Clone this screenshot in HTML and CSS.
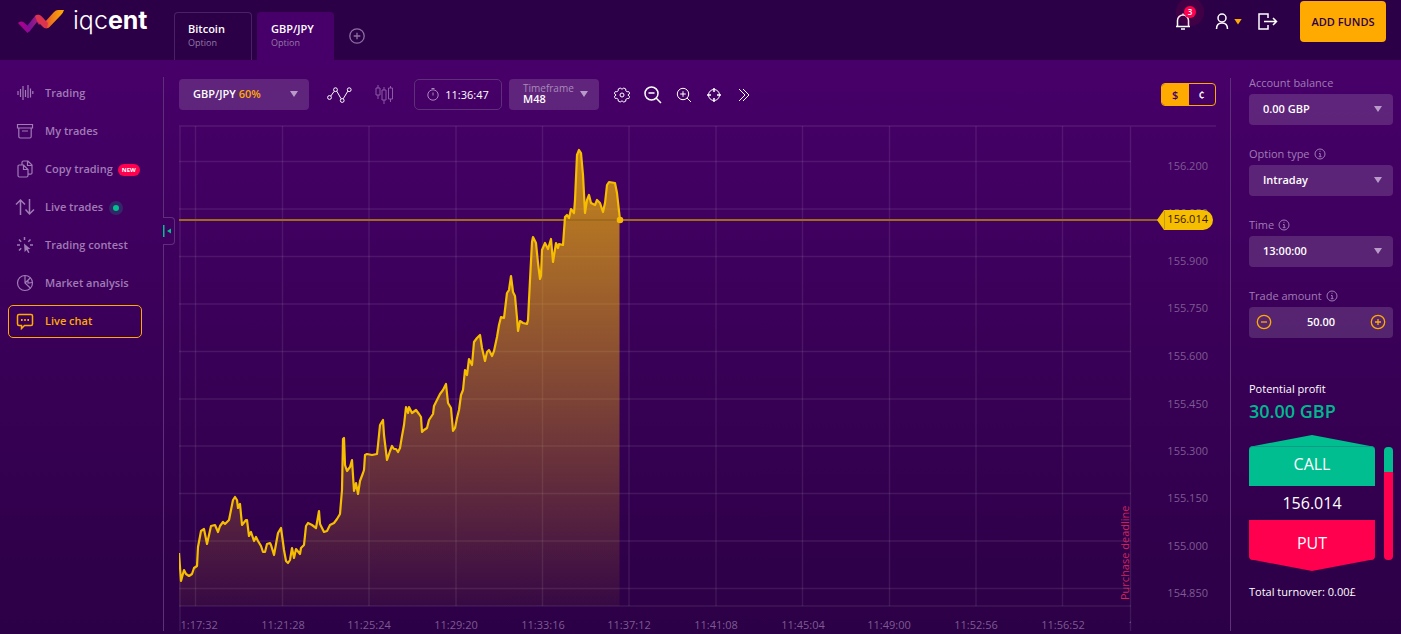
FILE: index.html
```html
<!DOCTYPE html>
<html lang="en">
<head>
<meta charset="utf-8">
<title>iqcent</title>
<link rel="stylesheet" href="styles.css">
</head>
<body>
<header class="header">
  <a class="logo" href="#">
    <svg width="46" height="25" viewBox="0 0 46 25" aria-hidden="true">
      <defs>
        <linearGradient id="lg1" x1="0" x2="1"><stop offset="0" stop-color="#b0008e"/><stop offset="1" stop-color="#8a0a98"/></linearGradient>
        <linearGradient id="lg2" x1="0" x2="1"><stop offset="0" stop-color="#6a109c"/><stop offset=".5" stop-color="#9a1c84"/><stop offset="1" stop-color="#e0304e"/></linearGradient>
        <linearGradient id="lg3" x1="0" x2="1"><stop offset="0" stop-color="#e8452e"/><stop offset=".4" stop-color="#ee7a1c"/><stop offset="1" stop-color="#ffae00"/></linearGradient>
      </defs>
      <path d="M9 18 17 8q3-2.500 6 0l3 3-5 6-2-3-8 10z" fill="url(#lg2)"/>
      <path d="M0 15q3-2.500 6-.500l5 4.500 1.500 3-3 3z" fill="url(#lg1)"/>
      <path d="M26 15 36 4q2-2 4-2h6q-1 3-3 5L31.500 19q-2 2-4 1z" fill="url(#lg3)"/>
      <path d="M17 8q3-2.500 6 0l7 7-1 5q-2 1-4-1l-6-6z" fill="#dc3450"/>
    </svg>
    <span class="logo-text">iqc<b>ent</b></span>
  </a>
  <nav class="tabs" aria-label="Assets">
    <button class="tab"><b>Bitcoin</b><small>Option</small></button>
    <button class="tab tab-active"><b>GBP/JPY</b><small>Option</small></button>
    <button class="icon-btn add-tab" aria-label="Add asset">
      <svg width="16" height="16" viewBox="0 0 16 16"><circle cx="8" cy="8" r="7.2"/><path d="M8 4.700v6.600M4.700 8h6.600"/></svg>
    </button>
  </nav>
  <div class="account">
    <button class="icon-btn bell" aria-label="Notifications">
      <svg width="16" height="17" viewBox="0 0 16 17"><path d="M1 13.500h14M2.500 13.500V7.500a5.500 5.500 0 0 1 11 0v6M8 2V.500M6 16h4"/></svg>
      <span class="badge">3</span>
    </button>
    <button class="icon-btn user" aria-label="Profile">
      <svg width="14" height="17" viewBox="0 0 14 17"><circle cx="7" cy="5" r="4"/><path d="M1.500 16q0-6 5.500-6t5.500 6"/></svg>
      <span class="caret caret-gold"></span>
    </button>
    <button class="icon-btn logout" aria-label="Log out">
      <svg width="20" height="17" viewBox="0 0 20 17"><path d="M10 5V1H1v15h9v-4M6 8.500h12.500M15 5l3.500 3.500L15 12"/></svg>
    </button>
    <button class="add-funds">ADD FUNDS</button>
  </div>
</header>

<div class="main">
  <aside class="sidebar">
    <nav class="menu" aria-label="Main">
      <a class="item" href="#"><svg viewBox="0 0 18 18"><path d="M2 7v4M4.500 5v8M7 2v14M9.500 6v7M12 1v13M14.500 4.500v9M16.800 7v3"/></svg>Trading</a>
      <a class="item" href="#"><svg viewBox="0 0 18 18"><path d="M1.500 2.500h15v3.500h-15zM2.800 6v8.500q0 1.500 1.500 1.500h9.400q1.500 0 1.500-1.500V6M6 9h6"/></svg>My trades</a>
      <a class="item" href="#"><svg viewBox="0 0 18 18"><path d="M6 4.500V2.500q0-1.500 1.500-1.500H12l4 4v8q0 1.200-1.500 1.200h-2M11.500 1v4.500H16M2 6.200q0-1.200 1.200-1.200H7.500l4.500 4.500v6q0 1.500-1.500 1.500h-7Q2 17 2 15.500zM7.500 5v4.500H12"/></svg>Copy trading<span class="new">NEW</span></a>
      <a class="item" href="#"><svg class="wide" viewBox="0 0 20 18"><path d="M5.500 17V2M1 6.500 5.500 2 10 6.500M14.500 1v15M10.500 11.500l4 4.500 4.500-4.500"/></svg>Live trades<span class="live"></span></a>
      <a class="item" href="#"><svg class="heavy" viewBox="0 0 18 18"><path d="M8.500 1v3M3 3.500 5.200 5.700M14.500 3.500l-2.200 2.200M1 9h3M14 9h3M3 14.500l2.200-2.200"/><path class="solid" d="M8 7.500l6.500 5.500-2.600.3 1.600 3.200-1.300.6-1.600-3.200L8.600 16z"/></svg>Trading contest</a>
      <a class="item" href="#"><svg viewBox="0 0 18 18"><circle cx="9" cy="9" r="7.500"/><path d="M9 1.500V9l5.500 5.200M9 9l5.500-5.200M12 6v3l4.500-.5"/></svg>Market analysis</a>
      <a class="item item-active" href="#"><svg class="heavy" viewBox="0 0 18 18"><path d="M3 2.500h12q1.500 0 1.500 1.500v8q0 1.500-1.500 1.500H8.500L5.500 16.500v-3H3Q1.500 13.500 1.500 12V4Q1.500 2.500 3 2.500z"/><path class="dots" d="M5 8h1.600M8.200 8h1.600M11.400 8h1.600"/></svg>Live chat</a>
    </nav>
    <button class="collapse" aria-label="Collapse menu"><svg width="9" height="12" viewBox="0 0 9 12"><path d="M0 0h1.500v12H0zM8 3.500v5L4 6z"/></svg></button>
  </aside>

  <main class="center">
    <div class="toolbar">
      <button class="field pair" aria-haspopup="listbox"><span>GBP/JPY <em>60%</em></span><span class="caret"></span></button>
      <button class="icon-btn tool-line" aria-label="Line chart"><svg width="25" height="16" viewBox="0 0 25 16"><path d="M3.800 9 7.200 4.300M9.800 4.200l4.200 7.500M16.200 11.800 20.800 4.200"/><circle cx="2.500" cy="10.500" r="1.900"/><circle cx="8.500" cy="2.700" r="1.900"/><circle cx="15.200" cy="13.500" r="1.900"/><circle cx="22.200" cy="2.700" r="1.900"/></svg></button>
      <button class="icon-btn tool-candles" aria-label="Candlestick chart"><svg width="18" height="19" viewBox="0 0 18 19"><path d="M3 0v3M3 10v4M9 2v3M9 15v4M15.500 1v2M15.500 14v3M1 3h4v7H1zM7 5h4v10H7zM13.500 3h4v11h-4z"/></svg></button>
      <div class="clock"><svg width="12" height="13" viewBox="0 0 12 13"><circle cx="6" cy="7" r="5.200"/><path d="M6 4.500V7.500M4.500.500h3"/></svg><time>11:36:47</time></div>
      <label class="field timeframe"><span class="tf-label">Timeframe</span><select><option>M48</option></select><span class="caret"></span></label>
      <div class="tools">
        <button class="icon-btn" aria-label="Settings"><svg width="16" height="16" viewBox="0 0 16 16"><circle cx="8" cy="8" r="2"/><path d="M6.200 1Q8 3.400 9.800 1l2 1q-.8 3 3 2.700v0q1 1 .6 2.300-3 1 0 2.300.2 1.300-.6 2.200-3.600-.4-3 2.600l-2 1Q8 12.600 6.200 15l-2-1q.6-3-3-2.600Q.400 10.500.600 9.200q3-1.200 0-2.300Q.200 5.700 1.200 4.700q3.800.3 3-2.700z"/></svg></button>
        <button class="icon-btn" aria-label="Zoom out"><svg width="18" height="18" viewBox="0 0 18 18"><g class="bold"><circle cx="7.500" cy="7.500" r="6.500"/><path d="M12.300 12.300 17 17M4.500 7h6"/></g></svg></button>
        <button class="icon-btn" aria-label="Zoom in"><svg width="16" height="16" viewBox="0 0 16 16"><circle cx="7" cy="7" r="5.700"/><path d="M11 11l4 4M7 4.200v5.600M4.200 7h5.600"/></svg></button>
        <button class="icon-btn" aria-label="Crosshair"><svg width="16" height="16" viewBox="0 0 16 16"><circle cx="8" cy="8" r="5.500"/><g class="bold"><path d="M8 1v4M8 11v4M1 8h4M11 8h4"/></g></svg></button>
        <button class="icon-btn" aria-label="More tools"><svg width="14" height="14" viewBox="0 0 14 14"><path d="M2 1l6 6-6 6M6 1l6 6-6 6"/></svg></button>
      </div>
      <div class="currency" role="group" aria-label="Units"><button class="on">$</button><button>¢</button></div>
    </div>

    <svg class="chart" viewBox="179 125 1037 506" role="img" aria-label="GBP/JPY price chart">
      <defs>
        <linearGradient id="area" gradientUnits="userSpaceOnUse" x1="0" y1="150" x2="0" y2="606">
          <stop offset="0" stop-color="#f6b800" stop-opacity=".74"/><stop offset="1" stop-color="#f6b800" stop-opacity=".05"/>
        </linearGradient>
        <clipPath id="axis-clip"><path d="M179 610h952v21H179z"/></clipPath>
        <clipPath id="plot-clip"><path d="M179 125h952v482H179z"/></clipPath>
      </defs>
      <g class="grid">
        <path d="M179 161.500H1131M179 209H1131M179 256.500H1131M179 304H1131M179 351.500H1131M179 399H1131M179 446H1131M179 493.500H1131M179 541H1131M179 588.500H1131M179 606H1131"/>
        <path d="M195.500 126V606M282.500 126V606M369 126V606M456 126V606M542.500 126V606M629 126V606M716 126V606M802.500 126V606M889.500 126V606M976 126V606M1062.500 126V606"/>
        <path class="edge" d="M179 126H1216M180 126V631M1130.500 126V631"/>
      </g>
      <g clip-path="url(#plot-clip)">
        <path fill="url(#area)" d="M179 606V553L181 581 184 570 186 574 189 576 192 574 194 568 197 566 198 547 201 531 204 529 207 544 211 526 215 525 218 532 220 526 223 522 225 524 229 520 230 515 233 500 235 497 237 500 238 508 240 504 242 525 246 520 247 520 249 536 251 532 254 541 256 537 258 541 261 546 263 552 265 552 267 544 270 543 271 545 274 555 278 533 281 528 284 550 286 561 288 563 290 560 292 548 294 558 296 549 300 554 301 548 304 545 306 526 308 523 312 525 316 528 319 511 320 524 324 532 327 531 330 525 334 523 337 519 340 514 342 490 343 439 344 438 345 465 347 471 350 467 352 460 354 491 356 483 358 494 360 481 363 473 364 470 365 455 367 454 372 455 377 454 378 445 380 425 383 420 384 435 387 460 390 451 392 446 394 449 396 449 398 452 400 448 402 436 404 425 406 407 408 413 409 407 412 413 416 410 419 414 421 417 422 432 424 430 427 428 429 420 433 414 434 406 438 398 440 394 443 390 446 384 448 403 451 408 453 431 455 428 457 418 459 410 461 395 463 390 465 370 467 375 469 359 472 365 474 342 477 338 480 335 482 348 485 361 487 352 489 350 492 356 494 351 497 337 499 325 501 317 504 318 507 293 509 290 511 276 513 292 515 296 517 318 518 331 520 321 523 323 527 324 528 320 530 280 532 242 533 237 536 243 538 263 540 279 541 276 542 250 545 243 548 249 551 239 553 262 556 243 558 248 559 244 563 245 565 217 567 215 569 218 571 209 574 213 575 200 577 155 579 150 581 153 583 175 585 213 587 200 589 195 591 203 595 205 597 200 600 203 603 212 605 203 607 185 609 182 615 183 617 193 619.500 220V606z"/>
        <path class="price-line" d="M179 220H1131"/>
        <path class="series" d="M179 553L181 581 184 570 186 574 189 576 192 574 194 568 197 566 198 547 201 531 204 529 207 544 211 526 215 525 218 532 220 526 223 522 225 524 229 520 230 515 233 500 235 497 237 500 238 508 240 504 242 525 246 520 247 520 249 536 251 532 254 541 256 537 258 541 261 546 263 552 265 552 267 544 270 543 271 545 274 555 278 533 281 528 284 550 286 561 288 563 290 560 292 548 294 558 296 549 300 554 301 548 304 545 306 526 308 523 312 525 316 528 319 511 320 524 324 532 327 531 330 525 334 523 337 519 340 514 342 490 343 439 344 438 345 465 347 471 350 467 352 460 354 491 356 483 358 494 360 481 363 473 364 470 365 455 367 454 372 455 377 454 378 445 380 425 383 420 384 435 387 460 390 451 392 446 394 449 396 449 398 452 400 448 402 436 404 425 406 407 408 413 409 407 412 413 416 410 419 414 421 417 422 432 424 430 427 428 429 420 433 414 434 406 438 398 440 394 443 390 446 384 448 403 451 408 453 431 455 428 457 418 459 410 461 395 463 390 465 370 467 375 469 359 472 365 474 342 477 338 480 335 482 348 485 361 487 352 489 350 492 356 494 351 497 337 499 325 501 317 504 318 507 293 509 290 511 276 513 292 515 296 517 318 518 331 520 321 523 323 527 324 528 320 530 280 532 242 533 237 536 243 538 263 540 279 541 276 542 250 545 243 548 249 551 239 553 262 556 243 558 248 559 244 563 245 565 217 567 215 569 218 571 209 574 213 575 200 577 155 579 150 581 153 583 175 585 213 587 200 589 195 591 203 595 205 597 200 600 203 603 212 605 203 607 185 609 182 615 183 617 193 620 220"/>
      </g>
      <path class="price-line" d="M1131 220H1158"/>
      <circle cx="620" cy="220" r="3.300" fill="#f6b800"/>
      <g class="axis" text-anchor="end">
        <text x="1208" y="170">156.200</text><text x="1208" y="217">156.050</text><text x="1208" y="265">155.900</text><text x="1208" y="312">155.750</text><text x="1208" y="360">155.600</text><text x="1208" y="408">155.450</text><text x="1208" y="455">155.300</text><text x="1208" y="502">155.150</text><text x="1208" y="550">155.000</text><text x="1208" y="597">154.850</text>
      </g>
      <g class="axis" text-anchor="middle" clip-path="url(#axis-clip)">
        <text x="196" y="629">11:17:32</text><text x="283" y="629">11:21:28</text><text x="369" y="629">11:25:24</text><text x="456" y="629">11:29:20</text><text x="543" y="629">11:33:16</text><text x="629" y="629">11:37:12</text><text x="716" y="629">11:41:08</text><text x="803" y="629">11:45:04</text><text x="889" y="629">11:49:00</text><text x="976" y="629">11:52:56</text><text x="1063" y="629">11:56:52</text><text x="1150" y="629">12:00:48</text>
      </g>
      <text class="deadline" transform="translate(1129 600) rotate(-90)">Purchase deadline</text>
      <path d="M1157 220l7-10h39a10 10 0 0 1 0 20h-39z" fill="#f6be00"/>
      <path d="M1164.500 211v18" stroke="#c79a10"/>
      <text class="tag" x="1208" y="223" text-anchor="end">156.014</text>
    </svg>
  </main>

  <aside class="trade">
    <div class="group"><label for="bal">Account balance</label><div class="field"><select id="bal"><option>0.00 GBP</option></select><span class="caret"></span></div></div>
    <div class="group"><label for="type">Option type <svg class="info" viewBox="0 0 12 12"><circle cx="6" cy="6" r="5"/><path d="M5 5.500h1.200v3M4.800 8.700h2.700M6 2.800v1"/></svg></label><div class="field"><select id="type"><option>Intraday</option></select><span class="caret"></span></div></div>
    <div class="group"><label for="time">Time <svg class="info" viewBox="0 0 12 12"><circle cx="6" cy="6" r="5"/><path d="M5 5.500h1.200v3M4.800 8.700h2.700M6 2.800v1"/></svg></label><div class="field"><select id="time"><option>13:00:00</option></select><span class="caret"></span></div></div>
    <div class="group"><label for="amount">Trade amount <svg class="info" viewBox="0 0 12 12"><circle cx="6" cy="6" r="5"/><path d="M5 5.500h1.200v3M4.800 8.700h2.700M6 2.800v1"/></svg></label>
      <div class="field amount">
        <button class="icon-btn" aria-label="Decrease"><svg width="16" height="16" viewBox="0 0 16 16"><circle cx="8" cy="8" r="6.700"/><path d="M5 8h6"/></svg></button>
        <input id="amount" type="text" value="50.00">
        <button class="icon-btn" aria-label="Increase"><svg width="16" height="16" viewBox="0 0 16 16"><circle cx="8" cy="8" r="6.700"/><path d="M5 8h6M8 5v6"/></svg></button>
      </div>
    </div>
    <div class="profit"><span>Potential profit</span><strong>30.00 GBP</strong></div>
    <div class="deal">
      <div class="deal-col">
        <button class="call"><svg viewBox="0 0 126 11" preserveAspectRatio="none"><path d="M5 11 63 0l58 11z"/></svg><span>CALL</span></button>
        <output class="rate">156.014</output>
        <button class="put"><span>PUT</span><svg viewBox="0 0 126 11" preserveAspectRatio="none"><path d="M5 0 63 11 121 0z"/></svg></button>
      </div>
      <div class="mood"></div>
    </div>
    <p class="turnover">Total turnover: 0.00£</p>
  </aside>
</div>
</body>
</html>
```
FILE: styles.css
```css
* { box-sizing: border-box; }
body {
  margin: 0;
  min-height: 100vh;
  display: flex;
  flex-direction: column;
  background: #2c0046;
  color: #fff;
  font: 11px/16px "Open Sans", "Noto Sans", sans-serif;
}
button, select, input {
  margin: 0;
  padding: 0;
  border: 0;
  background: none;
  color: inherit;
  font: inherit;
  cursor: pointer;
}
a { color: inherit; text-decoration: none; }
svg { fill: none; stroke: currentColor; display: block; flex: none; }
.icon-btn { display: flex; align-items: center; justify-content: center; }

.header { display: flex; height: 60px; align-items: flex-start; }
.logo { display: flex; width: 174px; padding: 8px 0 0 18px; gap: 9px; }
.logo svg { stroke: none; }
.logo-text { font: 300 25px/24px Inter, sans-serif; }
.logo-text b { font-weight: 700; }
.tabs { display: flex; gap: 5px; padding-top: 12px; align-items: flex-start; }
.tab {
  width: 78px;
  height: 48px;
  padding: 0 13px 2px;
  border: 1px solid #4c2065;
  border-bottom: 0;
  border-radius: 4px 4px 0 0;
  text-align: left;
}
.tab-active { width: 77px; background: #470069; border-color: #470069; }
.tab b, .tab small { display: block; }
.tab b { font-weight: 600; line-height: 14px; }
.tab small { font-size: 9px; line-height: 13px; color: #927aa6; }
.add-tab { width: 36px; height: 48px; color: #8d6fa3; }
.add-tab svg { stroke-width: 1.300; }
.account { display: flex; align-items: center; margin: 1px 15px 0 auto; height: 41px; }
.bell { position: relative; width: 16px; height: 41px; }
.badge {
  position: absolute;
  left: 9px;
  top: 5px;
  width: 12px;
  height: 12px;
  border-radius: 50%;
  background: #ff004f;
  box-shadow: 0 0 0 8px #ff004f1a;
  font: 600 8px/12px "Open Sans", sans-serif;
  text-align: center;
}
.bell svg, .user svg, .logout svg { stroke-width: 1.500; }
.user { margin-left: 24px; gap: 5px; }
.logout { margin-left: 16px; }
.caret { width: 8px; height: 6px; background: #b89bc9; clip-path: polygon(0 0, 100% 0, 50% 100%); flex: none; }
.caret-gold { background: #ffaa00; }
.add-funds {
  width: 86px;
  height: 41px;
  margin-left: 22px;
  border-radius: 4px;
  background: #ffaa00;
  color: #2c0046;
  font-weight: 600;
}

.main {
  flex: 1;
  display: flex;
  margin-bottom: 3px;
  background: linear-gradient(#470069, #2c0046);
}

.sidebar { position: relative; width: 164px; padding-top: 17px; display: flex; }
.menu {
  flex: 1;
  display: flex;
  flex-direction: column;
  gap: 5px;
  padding: 0 21px 0 8px;
  border-right: 1px solid #5e3079;
}
.item {
  display: flex;
  align-items: center;
  height: 33px;
  padding: 0 0 1px 7px;
  border: 1px solid transparent;
  border-radius: 5px;
  color: #a07bb6;
  font-weight: 600;
  white-space: nowrap;
}
.item svg { width: 18px; height: 18px; margin-right: 11px; stroke-width: 1.200; }
.item svg.wide { width: 20px; margin: 0 10px 0 -1px; stroke-width: 1.500; }
.item svg.heavy { stroke-width: 1.500; }
.item .solid { fill: currentColor; stroke: none; }
.item .dots { stroke-width: 2; }
.item-active { color: #ffaa00; border-color: #ffaa00; }
.new {
  margin: 2px 0 0 5px;
  padding: 0 4px;
  border-radius: 6px;
  background: #ff004f;
  color: #fff;
  font-size: 6px;
  font-weight: 700;
  line-height: 12px;
}
.live {
  width: 6px;
  height: 6px;
  margin: 2px 0 0 10px;
  border-radius: 50%;
  background: #00c08f;
  box-shadow: 0 0 0 4px #00c08f33;
}
.collapse {
  position: absolute;
  left: 163px;
  top: 157px;
  width: 12px;
  height: 28px;
  border: 1px solid #5e3079;
  border-left: 0;
  border-radius: 0 4px 4px 0;
  background: #3f0060;
}
.collapse svg { fill: #00c08f; stroke: none; }

.center { flex: 1; min-width: 0; padding: 19px 14px 0 15px; }
.toolbar { display: flex; align-items: center; height: 31px; margin-bottom: 15px; }
.field {
  display: flex;
  align-items: center;
  justify-content: space-between;
  height: 31px;
  padding: 0 11px 1px 14px;
  border-radius: 4px;
  background: #ffffff24;
  font-weight: 600;
}
.field select { flex: 1; appearance: none; outline: 0; }
.pair { width: 130px; }
.pair em { font-style: normal; color: #ffaa00; }
.tool-line { margin-left: 18px; }
.tool-candles { margin-left: 23px; color: #8a5ba3; }
.clock {
  display: flex;
  align-items: center;
  justify-content: center;
  gap: 6px;
  width: 88px;
  height: 31px;
  margin: 0 7px 0 21px;
  border: 1px solid #5e3079;
  border-radius: 5px;
}
.clock svg { color: #a98abb; }
.timeframe {
  display: grid;
  grid-template-columns: 1fr auto;
  align-content: center;
  align-items: center;
  width: 90px;
}
.tf-label { grid-area: 1 / 1; color: #a98abb; font-weight: 400; font-size: 10px; line-height: 10px; }
.timeframe select { grid-area: 2 / 1; line-height: 12px; height: 12px; }
.timeframe .caret { grid-area: 1 / 2 / span 2; }
.tools { display: flex; gap: 14px; margin-left: 15px; }
.tools .icon-btn { min-width: 16px; height: 18px; }
.tools .bold { stroke-width: 1.500; }
.currency {
  display: flex;
  width: 55px;
  height: 23px;
  margin-left: auto;
  border: 1px solid #ffaa00;
  border-radius: 4px;
  overflow: hidden;
}
.currency button { flex: 1; font-weight: 600; }
.currency .on { background: #ffaa00; color: #470069; }

.chart { width: 100%; height: auto; stroke: none; }
.grid path { stroke: #ffffff16; stroke-width: 1.400; }
.grid .edge { stroke: #ffffff18; }
.series { fill: none; stroke: #f6be00; stroke-width: 2.200; stroke-linejoin: round; }
.price-line { stroke: #a06a1c; stroke-width: 1.800; }
.axis { fill: #7d5b92; font-size: 11px; }
.deadline { fill: #d0255e; font-size: 11px; }
.tag { fill: #3a1500; font-size: 11px; }

.trade {
  width: 171px;
  margin-top: 18px;
  padding: 0 8px 0 18px;
  border-left: 1px solid #5e3079;
}
.group { margin-bottom: 21px; }
.group:first-child { margin-top: -3px; }
.group label {
  display: flex;
  align-items: center;
  gap: 4px;
  height: 16px;
  margin-bottom: 3px;
  color: #a07bb6;
}
.info { width: 12px; height: 12px; stroke-width: 1; }
.amount { padding: 0 7px 1px; color: #fff; }
.amount .icon-btn { color: #ffaa00; }
.amount svg { stroke-width: 1.300; }
.amount input { width: 60px; min-width: 0; text-align: center; font-weight: 600; outline: 0; }
.profit { display: flex; flex-direction: column; margin-top: 43px; }
.profit strong { margin-top: 2px; color: #00b88f; font-size: 18px; line-height: 24px; font-weight: 600; }
.deal { display: flex; gap: 9px; margin-top: 12px; }
.deal-col { flex: 1; display: flex; flex-direction: column; font-size: 16px; }
.call svg, .put svg { width: 100%; height: 11px; stroke: none; }
.call, .put { display: block; width: 100%; }
.call svg { fill: #00be90; }
.put svg { fill: #ff004f; }
.call span { display: block; line-height: 35px; height: 40px; background: #00be90; border-radius: 4px 4px 0 0; border-top: 1px solid #0f9a8a; }
.put span { display: block; line-height: 46px; height: 40px; background: #ff004f; border-radius: 0 0 4px 4px; }
.rate { height: 34px; line-height: 34px; text-align: center; }
.mood {
  width: 9px;
  margin: 12px 0 11px;
  border-radius: 4px;
  background: linear-gradient(#00be90 22%, #ff004f 22%);
}
.turnover { margin: 13px 0 0; }
```
